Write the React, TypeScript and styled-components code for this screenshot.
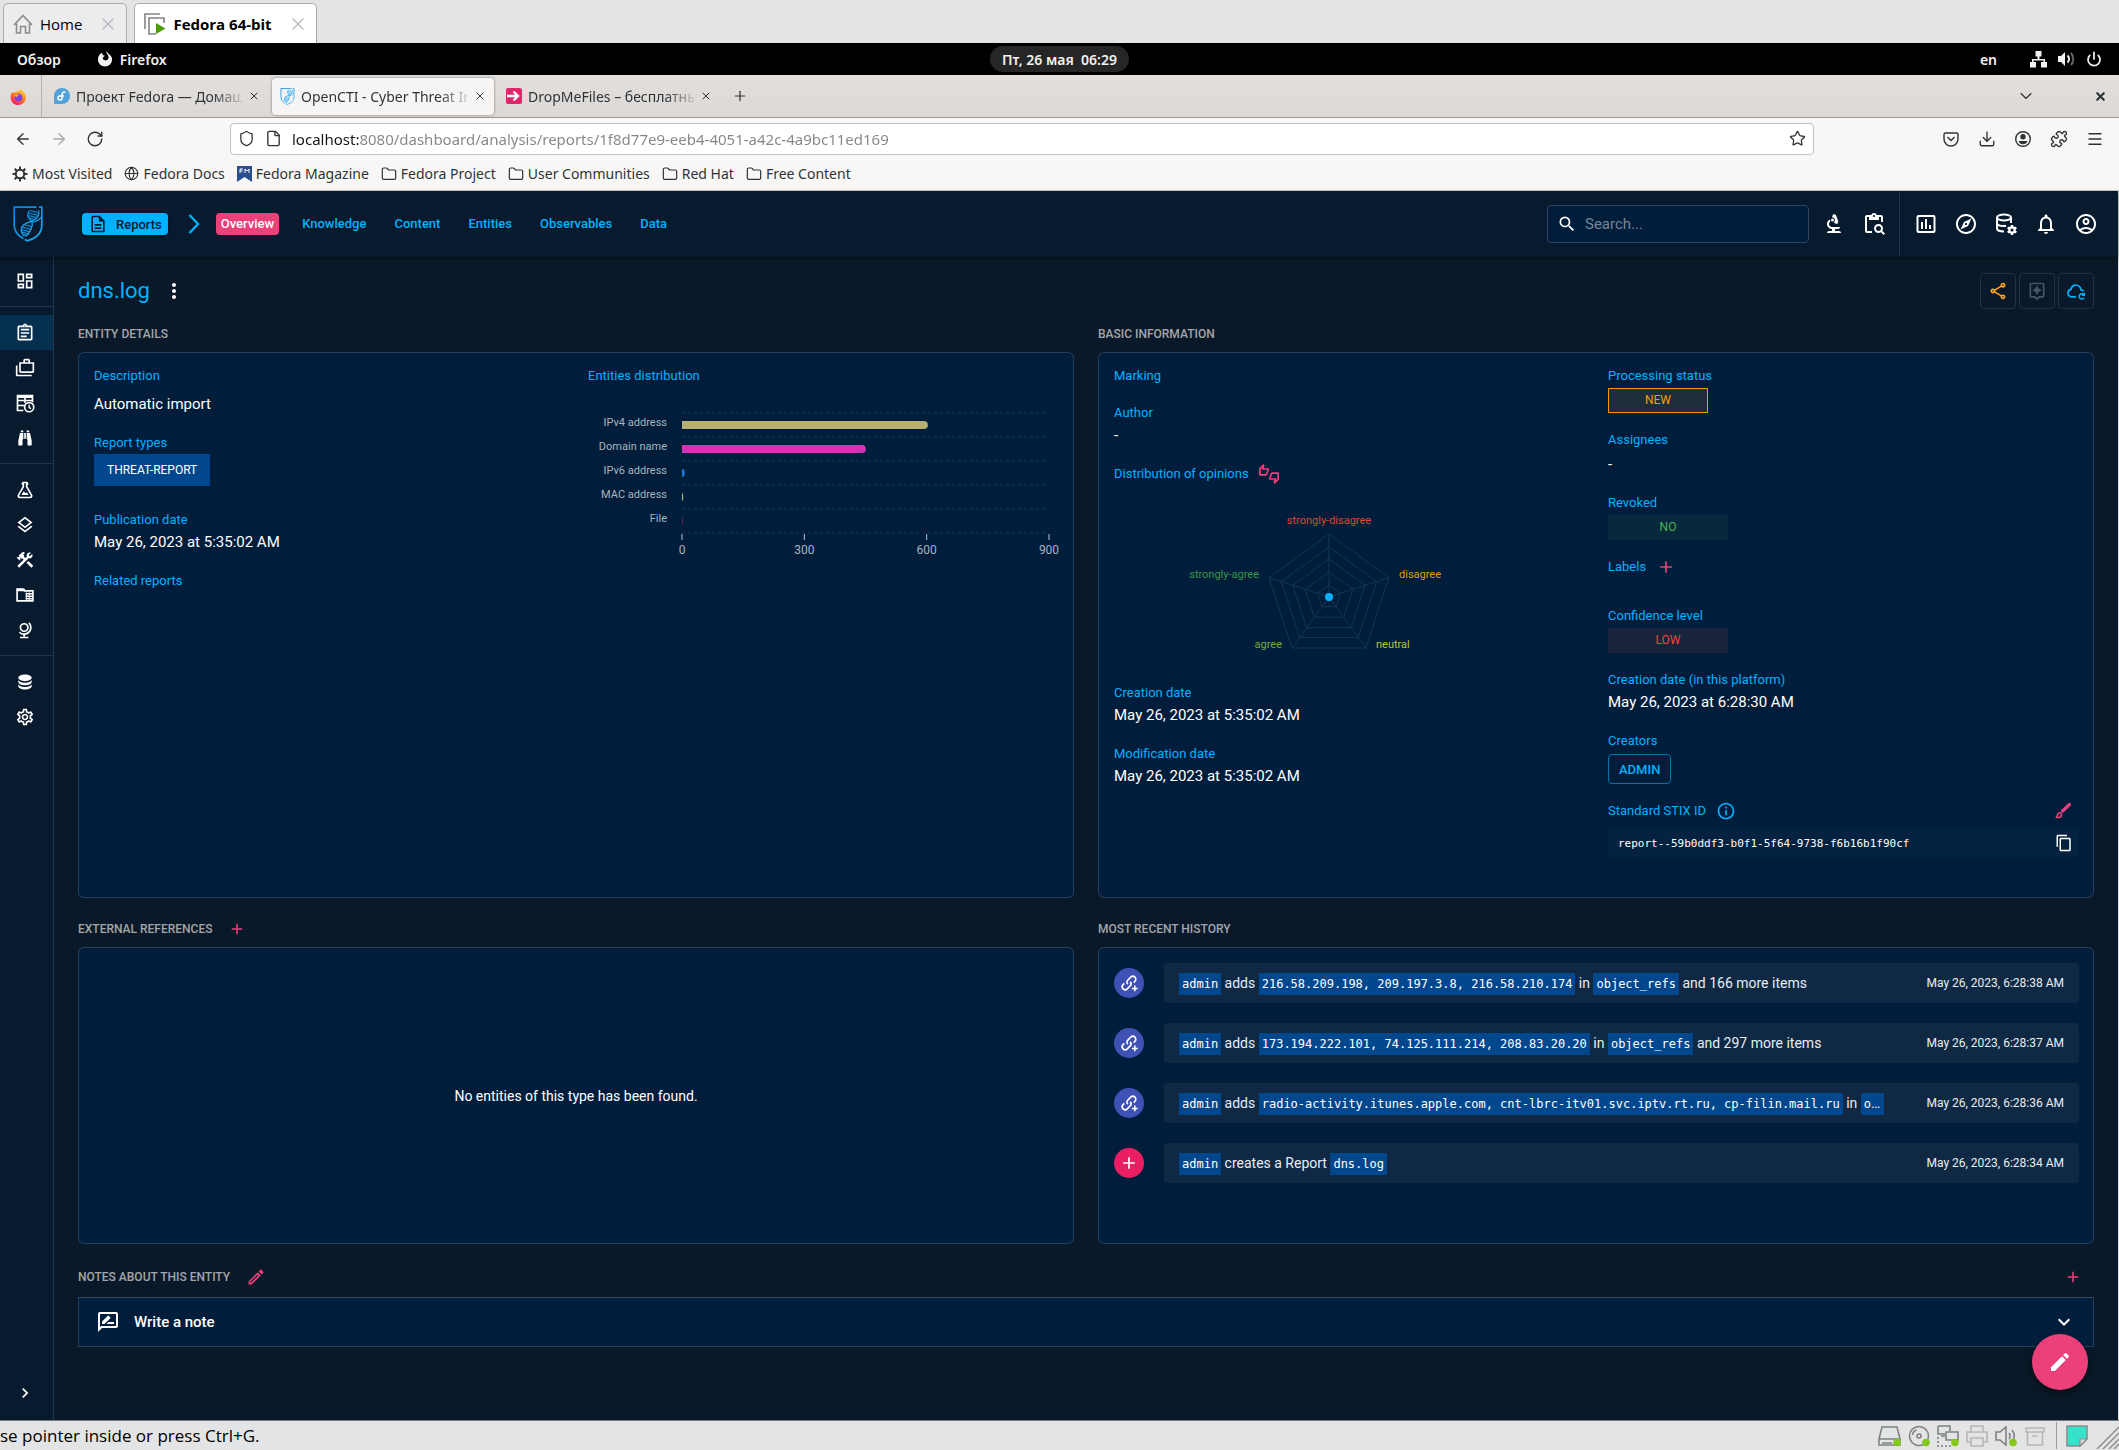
import React from 'react';
import styled, { createGlobalStyle, css } from 'styled-components';
import {
  MdOutlineDashboard, MdOutlineAssignment, MdOutlineCases, MdOutlineLayers, MdConstruction, MdOutlineSettings,
  MdChevronRight, MdSearch, MdBiotech, MdContentPasteSearch, MdInsertChartOutlined, MdOutlineExplore,
  MdNotificationsNone, MdOutlineAccountCircle, MdOutlineDescription, MdOutlineShare, MdOutlineAssistant,
  MdMoreVert, MdOutlineThumbsUpDown, MdAdd, MdOutlineInfo, MdContentCopy, MdOutlineEdit, MdOutlineRateReview,
  MdExpandMore, MdEdit,
} from 'react-icons/md';
import {
  ArrowLeft, ArrowRight, RotateCw, Shield, File, Star, Download, Menu, ChevronDown, X, Plus, Globe,
  Folder, Puzzle, Power,
} from 'lucide-react';

const c = {
  primary: '#00b1ff',
  secondary: '#ec407a',
  bg: '#0a1929',
  paper: '#001e3c',
  nav: '#071a2e',
  accent: '#01478d',
  line: 'rgba(255, 255, 255, 0.15)',
};
const ui = 'Roboto, "Noto Sans", sans-serif';
const chrome = '"Noto Sans", "Open Sans", sans-serif';
const vm = '"Open Sans", "Noto Sans", sans-serif';
const mono = '"DejaVu Sans Mono", "Liberation Mono", monospace';

const GlobalStyle = createGlobalStyle`
  *, *::before, *::after { box-sizing: border-box; }
  body { margin: 0; background: ${c.bg}; }
  button { font: inherit; color: inherit; border: 0; padding: 0; background: none; cursor: pointer; }
  a { color: inherit; text-decoration: none; }
  h1, h2, h3, p, ul { margin: 0; padding: 0; font-weight: 400; }
  svg { display: block; flex: none; }
`;

const Screen = styled.div`
  min-height: 100vh;
  display: flex;
  flex-direction: column;
`;

/* ---------- virtual machine window ---------- */

const VmTabs = styled.div`
  height: 43px;
  padding: 3px 3px 0;
  display: flex;
  gap: 7px;
  background: #e3e4e6;
  font-family: ${vm};
`;
const VmTab = styled.div<{ $active?: boolean }>`
  display: flex;
  align-items: center;
  gap: 7px;
  padding: 0 8px 0 9px;
  border: 1px solid #a9abad;
  border-bottom: 0;
  border-radius: 5px 5px 0 0;
  background: ${p => (p.$active ? '#fff' : '#ebecee')};
  font-size: 15px;
  font-weight: ${p => (p.$active ? 700 : 400)};
  color: #000;
`;
const VmTabClose = styled.button`
  margin-left: 9px;
  color: #b4b6b8;
`;

const VmStatus = styled.footer`
  height: 30px;
  display: flex;
  align-items: center;
  justify-content: space-between;
  border-top: 1px solid #77787a;
  background: #e3e4e6;
  color: #000;
  font-family: ${vm};
  font-size: 17px;
  line-height: 24px;
`;
const VmDevices = styled.div`
  display: flex;
  align-items: center;
  gap: 5px;
`;
const VmDivider = styled.span`
  width: 1px;
  height: 27px;
  margin: 0 4px;
  background: #9b9c9e;
`;

/* ---------- desktop top bar ---------- */

const DesktopBar = styled.div`
  height: 32px;
  display: grid;
  grid-template-columns: 1fr auto 1fr;
  align-items: center;
  padding: 0 17px;
  background: #000;
  color: #f2f2f2;
  font-family: ${chrome};
  font-size: 14px;
  font-weight: 600;
`;
const DesktopGroup = styled.div<{ $end?: boolean; $gap: number }>`
  display: flex;
  align-items: center;
  gap: ${p => p.$gap}px;
  justify-content: ${p => (p.$end ? 'flex-end' : 'flex-start')};
`;
const DesktopItem = styled.button`
  display: flex;
  align-items: center;
  gap: 7px;
`;
const Clock = styled.button`
  height: 26px;
  padding: 0 12px;
  border-radius: 13px;
  background: #262626;
  white-space: pre;
`;

/* ---------- browser ---------- */

const BrowserTabs = styled.div`
  height: 43px;
  display: flex;
  align-items: center;
  border-bottom: 1px solid #9c9995;
  background: linear-gradient(#e3dfdc, #dcd8d5);
  color: #2e3436;
  font-family: ${chrome};
  font-size: 14px;
`;
const PinnedTab = styled.button`
  width: 42px;
  height: 100%;
  padding: 0 12px 0 10px;
  border-right: 1px solid #b5b1ad;
`;
const BrowserTab = styled.div<{ $active?: boolean }>`
  width: 222px;
  height: 37px;
  margin-left: 4px;
  padding: 0 8px;
  display: flex;
  align-items: center;
  gap: 6px;
  border-radius: 4px;
  ${p => p.$active && css`
    background: #f6f5f4;
    box-shadow: 0 0 3px rgba(0, 0, 0, 0.45);
  `}
`;
const TabTitle = styled.span`
  flex: 1;
  overflow: hidden;
  white-space: nowrap;
  mask-image: linear-gradient(to right, #000 82%, rgba(0, 0, 0, 0.15));
`;
const TabActions = styled.div`
  margin-left: auto;
  padding-right: 12px;
  display: flex;
  align-items: center;
  gap: 58px;
`;
const NewTab = styled.button`
  margin-left: 12px;
`;
const AddressRow = styled.div`
  display: grid;
  grid-template-columns: 230px minmax(0, 1fr) 305px;
  align-items: center;
  height: 41px;
  background: #f8f7f6;
  color: #2e3436;
`;
const NavButtons = styled.div`
  display: flex;
  gap: 18px;
  padding-left: 14px;
`;
const IconButton = styled.button<{ $color?: string }>`
  display: inline-flex;
  color: ${p => p.$color || 'inherit'};
`;
const AddressBox = styled.label`
  height: 32px;
  display: flex;
  align-items: center;
  gap: 10px;
  padding: 0 7px;
  border: 1px solid #c3c1be;
  border-radius: 4px;
  background: #fff;
`;
const AddressInput = styled.input`
  flex: 1;
  min-width: 0;
  border: 0;
  outline: 0;
  padding: 0;
  font-family: ${chrome};
  font-size: 15px;
  color: transparent;
  background: linear-gradient(to right, #15141a 67px, #858585 67px);
  background-clip: text;
`;
const BrowserTools = styled.div`
  display: flex;
  justify-content: flex-end;
  gap: 18px;
  padding-right: 15px;
`;
const Bookmarks = styled.nav`
  height: 32px;
  display: flex;
  align-items: center;
  gap: 12px;
  padding: 0 12px 2px;
  background: #f8f7f6;
  border-bottom: 1px solid #cfccc8;
  color: #2e3436;
  font-family: ${chrome};
  font-size: 14px;
`;
const Bookmark = styled.a`
  display: flex;
  align-items: center;
  gap: 4px;
`;

/* ---------- application ---------- */

const AppShell = styled.div`
  flex: 1;
  display: flex;
  flex-direction: column;
  border-right: 1px solid #dcdcdc;
  background: ${c.bg};
  color: #fff;
  font-family: ${ui};
  font-size: 15px;
`;
const TopBar = styled.header`
  position: relative;
  height: 66px;
  display: flex;
  align-items: center;
  padding: 0 20px 0 13px;
  background: ${c.nav};
  box-shadow: 0 2px 4px rgba(0, 0, 0, 0.4);
`;
const Crumbs = styled.nav`
  flex: 1;
  display: flex;
  align-items: center;
  padding-left: 39px;
  font-size: 13px;
  font-weight: 500;
`;
const TypeButton = styled.button`
  height: 22px;
  display: flex;
  align-items: center;
  gap: 8px;
  padding: 0 6px;
  border-radius: 4px;
  background: ${c.primary};
  color: ${c.nav};
  box-shadow: 0 2px 3px rgba(0, 0, 0, 0.35);
`;
const CrumbArrow = styled.svg`
  margin: 0 16px 0 20px;
`;
const NavTabs = styled.div`
  display: flex;
  gap: 18px;
`;
const NavTab = styled.a<{ $active?: boolean }>`
  height: 22px;
  line-height: 22px;
  padding: 0 5px;
  border-radius: 4px;
  background: ${p => (p.$active ? c.secondary : 'transparent')};
  color: ${p => (p.$active ? '#fff' : c.primary)};
`;
const SearchBox = styled.label`
  width: 262px;
  height: 38px;
  display: flex;
  align-items: center;
  gap: 8px;
  padding: 0 9px;
  border: 1px solid #2f4762;
  border-radius: 4px;
  background: ${c.paper};
`;
const SearchInput = styled.input`
  flex: 1;
  min-width: 0;
  padding: 0;
  border: 0;
  outline: 0;
  background: none;
  color: #fff;
  font-family: ${ui};
  font-size: 15px;
  &::placeholder { color: #74859a; opacity: 1; }
`;
const ToolGroup = styled.div<{ $divided?: boolean }>`
  height: 64px;
  display: flex;
  align-items: center;
  gap: 16px;
  padding: ${p => (p.$divided ? '0 0 0 14px' : '0 13px')};
  border-left: ${p => (p.$divided ? '1px solid #253549' : '0')};
`;

const Body = styled.div`
  flex: 1;
  display: flex;
`;
const SideBar = styled.nav`
  width: 54px;
  display: flex;
  flex-direction: column;
  border-right: 1px solid #253549;
  background: ${c.nav};
`;
const SideGroup = styled.div`
  padding: 8px 0;
  border-bottom: 1px solid #253549;
  &:first-child { padding-top: 6px; }
  &:nth-last-child(2) { border-bottom: 0; }
`;
const SideItem = styled.button<{ $active?: boolean }>`
  width: 100%;
  height: 35px;
  display: flex;
  align-items: center;
  padding-left: 15px;
  background: ${p => (p.$active ? '#06304f' : 'none')};
`;
const SideToggle = styled.div`
  margin-top: auto;
  padding-bottom: 10px;
`;

const Main = styled.main`
  flex: 1;
  min-width: 0;
  padding: 16px 24px;
`;
const TitleRow = styled.div`
  display: flex;
  align-items: center;
  margin-bottom: 15px;
`;
const Title = styled.h1`
  color: ${c.primary};
  font-size: 22px;
  line-height: 36px;
  margin-right: 12px;
`;
const TitleActions = styled.div`
  margin-left: auto;
  display: flex;
  gap: 3px;
`;
const SquareButton = styled.button<{ $color: string }>`
  width: 36px;
  height: 36px;
  display: grid;
  place-items: center;
  border: 1px solid #223140;
  border-radius: 4px;
  color: ${p => p.$color};
`;
const Sections = styled.div`
  display: flex;
  flex-direction: column;
  gap: 21px;
`;
const SectionRow = styled.div`
  display: grid;
  grid-template-columns: repeat(2, minmax(0, 1fr));
  gap: 24px;
`;
const SectionHead = styled.div<{ $tall?: boolean }>`
  height: ${p => (p.$tall ? 24 : 20)}px;
  margin-bottom: 8px;
  display: flex;
  align-items: center;
  gap: 16px;
`;
const SectionTitle = styled.h2`
  color: #a3a6aa;
  font-size: 12px;
  font-weight: 500;
  line-height: 20px;
  text-transform: uppercase;
`;
const Card = styled.div<{ $minHeight: number }>`
  min-height: ${p => p.$minHeight}px;
  border: 1px solid ${c.line};
  border-radius: 6px;
  background: ${c.paper};
`;
const FieldColumns = styled(Card)`
  display: grid;
  grid-template-columns: repeat(2, minmax(0, 1fr));
  gap: 24px;
  padding: 13px 15px;
`;
const FieldColumn = styled.div`
  display: flex;
  flex-direction: column;
  gap: 17px;
`;
const FieldLabel = styled.h3`
  height: 20px;
  display: flex;
  align-items: center;
  gap: 10px;
  color: ${c.primary};
  font-size: 13px;
  line-height: 20px;
`;
const LabelEnd = styled.span`
  margin-left: auto;
  padding-right: 6px;
  display: flex;
`;
const FieldValue = styled.p<{ $space?: number }>`
  padding-top: ${p => p.$space || 0}px;
  line-height: 24px;
`;
const EmptyValue = styled.div`
  height: 12px;
`;
const TypeChip = styled.span`
  display: inline-block;
  height: 32px;
  margin: 1px 0 7px;
  padding: 0 13px;
  background: ${c.accent};
  font-size: 12px;
  line-height: 32px;
`;
const tones = {
  orange: { fg: '#ff9800', bg: '#1f2d38', border: '#ff9800' },
  green: { fg: '#4caf50', bg: '#06293e', border: '#06293e' },
  red: { fg: '#f44336', bg: '#19233b', border: '#19233b' },
};
const StatusChip = styled.span<{ $tone: keyof typeof tones; $width: number }>`
  width: ${p => p.$width}px;
  height: 25px;
  margin-top: 2px;
  display: block;
  border: 1px solid ${p => tones[p.$tone].border};
  background: ${p => tones[p.$tone].bg};
  color: ${p => tones[p.$tone].fg};
  font-size: 12px;
  line-height: 23px;
  text-align: center;
`;
const CreatorButton = styled.button`
  height: 30px;
  margin-top: 3px;
  padding: 0 10px;
  border: 1px solid #0373ae;
  border-radius: 4px;
  color: ${c.primary};
  font-size: 13px;
  font-weight: 500;
`;
const CodeBox = styled.div`
  height: 28px;
  margin-top: 8px;
  display: flex;
  align-items: center;
  justify-content: space-between;
  padding: 0 5px 0 10px;
  background: #052340;
  font-family: ${mono};
  font-size: 11px;
`;
const Chart = styled.svg`
  width: 100%;
  height: auto;
  overflow: visible;
  font-family: ${ui};
`;
const ChartBlock = styled.div`
  margin-top: 4px;
`;
const RadarBlock = styled.div`
  height: 182px;
  display: flex;
  align-items: flex-start;
  justify-content: center;
  padding-right: 40px;
`;
const EmptyCard = styled(Card)`
  display: grid;
  place-items: center;
  font-size: 14px;
`;
const HistoryCard = styled(Card)`
  display: flex;
  flex-direction: column;
  gap: 20px;
  padding: 15px 14px 15px 15px;
`;
const HistoryRow = styled.div`
  display: flex;
  align-items: center;
  gap: 20px;
`;
const Avatar = styled.span<{ $color: string }>`
  width: 30px;
  height: 30px;
  flex: none;
  display: grid;
  place-items: center;
  border-radius: 50%;
  background: ${p => p.$color};
`;
const HistoryBox = styled.div`
  flex: 1;
  min-width: 0;
  height: 40px;
  display: flex;
  align-items: center;
  padding: 0 15px;
  border-radius: 4px;
  background: #0f2944;
`;
const HistoryText = styled.p`
  flex: 1;
  min-width: 0;
  overflow: hidden;
  white-space: nowrap;
  text-overflow: ellipsis;
  line-height: 24px;
  font-size: 14px;
  color: #e9edf1;
`;
const Code = styled.code`
  padding: 4px 3px;
  background: ${c.accent};
  color: #fff;
  font-family: ${mono};
  font-size: 12px;
`;
const HistoryDate = styled.time`
  flex: 0 0 180px;
  text-align: right;
  font-size: 12px;
  color: #e9edf1;
`;
const NotePanel = styled.button`
  width: 100%;
  height: 50px;
  display: flex;
  align-items: center;
  gap: 14px;
  padding: 0 17px;
  border: 1px solid ${c.line};
  border-top-color: #34495f;
  background: ${c.paper};
  font-size: 15px;
  font-weight: 500;
`;
const PushRight = styled.span`
  margin-left: auto;
  display: flex;
`;
const HeadEnd = styled(PushRight)`
  padding-right: 12px;
`;
const EditFab = styled.button`
  position: fixed;
  right: 31px;
  bottom: 60px;
  width: 56px;
  height: 56px;
  display: grid;
  place-items: center;
  border-radius: 50%;
  background: ${c.secondary};
  color: #fff;
  box-shadow: 0 4px 8px rgba(0, 0, 0, 0.45);
`;

/* ---------- drawings ---------- */

type GlyphProps = { d: string; size?: number };
const Glyph = ({ d, size = 20 }: GlyphProps) => (
  <svg width={size} height={size} viewBox="0 0 24 24" fill="currentColor" aria-hidden="true"><path d={d} /></svg>
);
const glyph = {
  binoculars: 'M11,6H13V13H11V6M9,20A1,1 0 0,1 8,21H5A1,1 0 0,1 4,20V15L6,6H10V13A1,1 0 0,1 9,14V20M10,5H7V3H10V5M15,20V14A1,1 0 0,1 14,13V6H18L20,15V20A1,1 0 0,1 19,21H16A1,1 0 0,1 15,20M14,5V3H17V5H14Z',
  flask: 'M5,19A1,1 0 0,0 6,20H18A1,1 0 0,0 19,19C19,18.79 18.93,18.59 18.82,18.43L13,8.35V4H11V8.35L5.18,18.43C5.07,18.59 5,18.79 5,19M6,22A3,3 0 0,1 3,19C3,18.4 3.18,17.84 3.5,17.37L9,7.81V6A1,1 0 0,1 8,5V4A2,2 0 0,1 10,2H14A2,2 0 0,1 16,4V5A1,1 0 0,1 15,6V7.81L20.5,17.37C20.82,17.84 21,18.4 21,19A3,3 0 0,1 18,22H6M13,16L14.34,14.66L16.27,18H7.73L10.39,13.39L13,16M12.5,12A0.5,0.5 0 0,1 13,12.5A0.5,0.5 0 0,1 12.5,13A0.5,0.5 0 0,1 12,12.5A0.5,0.5 0 0,1 12.5,12Z',
  globeModel: 'M17.36,2.64L15.95,4.06C17.26,5.37 18,7.14 18,9A7,7 0 0,1 11,16C9.15,16 7.37,15.26 6.06,13.95L4.64,15.36C6.08,16.8 7.97,17.71 10,17.93V20H6V22H16V20H12V17.94C16.55,17.43 20,13.58 20,9C20,6.62 19.05,4.33 17.36,2.64M11,3.5A5.5,5.5 0 0,0 5.5,9A5.5,5.5 0 0,0 11,14.5A5.5,5.5 0 0,0 16.5,9A5.5,5.5 0 0,0 11,3.5M11,5.5C12.94,5.5 14.5,7.07 14.5,9A3.5,3.5 0 0,1 11,12.5A3.5,3.5 0 0,1 7.5,9A3.5,3.5 0 0,1 11,5.5Z',
  database: 'M12,3C7.58,3 4,4.79 4,7C4,9.21 7.58,11 12,11C16.42,11 20,9.21 20,7C20,4.79 16.42,3 12,3M4,9V12C4,14.21 7.58,16 12,16C16.42,16 20,14.21 20,12V9C20,11.21 16.42,13 12,13C7.58,13 4,11.21 4,9M4,14V17C4,19.21 7.58,21 12,21C16.42,21 20,19.21 20,17V14C20,16.21 16.42,18 12,18C7.58,18 4,16.21 4,14Z',
};
const TableClock = () => (
  <svg width="20" height="20" viewBox="0 0 24 24" fill="none" stroke="currentColor" strokeWidth="2" aria-hidden="true">
    <path d="M10 21H3V3h18v8M3 9h18M3 15h8M12 3v9" /><path d="M3 4.500h18" strokeWidth="3" />
    <circle cx="17" cy="17" r="5.500" /><path d="M17 14v3.500l2.300 1.300" strokeWidth="1.700" />
  </svg>
);
const FolderTable = () => (
  <svg width="20" height="20" viewBox="0 0 24 24" fill="none" stroke="currentColor" strokeWidth="2" aria-hidden="true">
    <path d="M2.500 5h7l2 2h10v12h-19z" /><path d="M2 6h10" strokeWidth="3" />
    <path d="M13 10.500h8M13 13.500h8M13 16.500h8" strokeWidth="1.800" /><path d="M13.500 9v8.500M17 9v8.500" strokeWidth="1.300" />
  </svg>
);
const Gear = ({ x, y }: { x: number; y: number }) => (
  <g transform={`translate(${x} ${y})`}>
    <circle r="2.700" strokeWidth="2.200" />
    {[0, 60, 120, 180, 240, 300].map(a => <path key={a} d="M0 -3v-2" strokeWidth="2.400" transform={`rotate(${a})`} />)}
  </g>
);
const DatabaseCog = () => (
  <svg width="24" height="24" viewBox="0 0 24 24" fill="none" stroke="currentColor" strokeWidth="2" aria-hidden="true">
    <ellipse cx="10" cy="5.500" rx="7" ry="3" />
    <path d="M3 5.500v11c0 1.700 3.100 3 7 3M17 5.500V11M3 11c0 1.700 3 3 7 3 .8 0 1.500 0 2-.2" />
    <Gear x={18} y={18} />
  </svg>
);
const CloudRefresh = () => (
  <svg width="20" height="20" viewBox="0 0 24 24" fill="none" stroke="currentColor" strokeWidth="2" aria-hidden="true">
    <path d="M12 19H6.500A4.500 4.500 0 0 1 6 10.100 6 6 0 0 1 17.900 10.500c1.500.2 2.600.8 3.300 1.700" />
    <path d="M21.500 16.500a3.200 3.200 0 1 0 .3 3.500M22 14v3h-3" strokeWidth="1.700" />
  </svg>
);
const LinkPlus = () => (
  <svg width="20" height="20" viewBox="0 0 24 24" fill="none" stroke="currentColor" strokeWidth="1.900" aria-hidden="true">
    <path d="M10.600 13.400c-1.500-1.500-1.500-3.400 0-4.900l3.500-3.500a3.500 3.500 0 0 1 5 5l-1.500 1.500" />
    <path d="M13.400 10.600c1.500 1.500 1.500 3.400 0 4.900l-3.500 3.500a3.500 3.500 0 0 1-5-5l1.500-1.500" />
    <path d="M19 15v7M15.500 18.500h7" />
  </svg>
);
const BrushIcon = () => (
  <svg width="18" height="18" viewBox="0 0 24 24" fill="none" stroke="currentColor" aria-hidden="true">
    <path d="M20.500 3.500L11.500 12" strokeWidth="4.500" strokeLinecap="round" />
    <path d="M7.500 14.500a2.600 2.600 0 0 1 2.500 3.400C9.300 20 6 21 2.500 20.500c1.800-.6 1.800-1.800 2.200-3.500.3-1.500 1.300-2.500 2.800-2.500z" strokeWidth="2" />
  </svg>
);
const Logo = ({ width = 30, height = 36 }: { width?: number; height?: number }) => (
  <svg width={width} height={height} viewBox="0 0 30 36" fill="none" stroke="url(#logo-tone)" aria-label="OpenCTI" role="img">
    <defs>
      <linearGradient id="logo-tone" x1="0" y1="0" x2="30" y2="36" gradientUnits="userSpaceOnUse">
        <stop offset="0" stopColor="#0a7fe0" /><stop offset="1" stopColor="#18b4f5" />
      </linearGradient>
    </defs>
    <path d="M23.500 1.200H1.200V19c0 6 3.500 10.500 9 13.500M26 1.200h2.800V19c0 7-5 13-14.500 15.800l-2.500-1.300" strokeWidth="1.700" />
    <path d="M16 5c-2 3-1.500 6 1 8.500 2.500 2.300 2.700 6 1 9.500-1.200 2.800-2.500 5-5.500 7.500" strokeWidth="1.300" />
    <path d="M25.500 4.500c1 4.500-1.500 8.500-6.500 10.500-5 1.800-9.500 3-10.500 7.500-.6 3 .5 5.500 3 7.500" strokeWidth="1.500" />
    <path d="M28 11c-1.500 3.500-5 4.500-9 5.500" strokeWidth="1.200" />
    <path d="M16.500 4.500l8 2M15.500 7l9 2.200M15.500 9.500l8 2M16.500 12l5 1.300M10.500 18.500l7.500 2M9 21l9.500 2.500M8.500 23.500l9 2.500M9 26l7 2M10.500 28.500l3.500 1" strokeWidth="1.100" />
  </svg>
);
const FirefoxLogo = () => (
  <svg width="17" height="17" viewBox="0 0 18 18" aria-hidden="true">
    <defs>
      <linearGradient id="fox" x1="14" y1="1" x2="4" y2="17" gradientUnits="userSpaceOnUse">
        <stop offset="0" stopColor="#ffe14a" /><stop offset=".45" stopColor="#ff8a16" /><stop offset="1" stopColor="#f5156c" />
      </linearGradient>
    </defs>
    <path d="M11 0c.5 2 3 3 4.500 5.200C19.500 11 15 18 9 18S-.5 13 1 7c.3-1.300 1-2.500 1.500-3 .2.800.6 1.300 1 1.600C5.500 3.500 8.500 4 9.500 2.800 10 2 10.300 1 11 0z" fill="url(#fox)" />
    <circle cx="9" cy="10" r="4" fill="#7a3ff0" /><path d="M4.500 7.500c2-1.500 4.500-.5 5 .8-1.500 0-2.500 1-3 2-.5-1.500-1-2-2-2.800z" fill="#ffa824" />
  </svg>
);
const FoxMono = () => (
  <svg width="16" height="16" viewBox="0 0 18 18" fill="#f2f2f2" aria-hidden="true">
    <path d="M10.500 0c0 2 .5 3 1.500 4.200 1 1.300 1.300 3 .8 4.300-.8 2-3 2.700-4.800 1.700C6.600 9.400 6.300 8 7 7l2-1.800C7 5 6 4.500 5.500 2 3.500 3 1 5.500 1 9.500a8 8 0 0 0 16 0C17 5 13 4 10.500 0z" />
  </svg>
);
const HomeIcon = () => (
  <svg width="20" height="20" viewBox="0 0 20 20" fill="none" stroke="#8a8c8e" strokeWidth="1.600" aria-hidden="true">
    <path d="M1 11L10 1.500 19 11M3.500 9.500V19H7.500V12.500h5V19h4V9.500" />
  </svg>
);
const MachineIcon = () => (
  <svg width="22" height="22" viewBox="0 0 22 22" fill="none" stroke="#808284" strokeWidth="1.600" aria-hidden="true">
    <path d="M1 16V1h15M12 21H5V5h15v5" /><path d="M12 10l9.500 5.500L12 21z" fill="#4e9a06" stroke="none" />
  </svg>
);
const FedoraIcon = () => (
  <svg width="16" height="16" viewBox="0 0 16 16" aria-hidden="true">
    <path d="M0 8a8 8 0 1 1 8 8H1.500A1.500 1.500 0 0 1 0 14.500z" fill="#51a2da" />
    <path d="M11.500 4.200C9.800 3.400 8 4.500 8 6.500V10a2 2 0 1 1-2-2h4" fill="none" stroke="#fff" strokeWidth="1.500" />
  </svg>
);
const DropIcon = () => (
  <svg width="16" height="16" viewBox="0 0 16 16" aria-hidden="true">
    <rect width="16" height="16" rx="2" fill="#e5246c" /><path d="M1 8h10M7.500 3.500L12 8l-4.500 4.500" fill="none" stroke="#fff" strokeWidth="2.400" />
  </svg>
);
const MagazineIcon = () => (
  <svg width="15" height="16" viewBox="0 0 15 16" aria-hidden="true">
    <path d="M0 0h15v16l-7.500-5L0 16z" fill="#294f91" /><path d="M3 7V3h3M3 5h2.500M8 7V3l2 2 2-2v4" fill="none" stroke="#fff" />
  </svg>
);
const SunGear = () => (
  <svg width="16" height="16" viewBox="0 0 16 16" fill="none" stroke="#2e3436" aria-hidden="true">
    <circle cx="8" cy="8" r="4.200" strokeWidth="2" />
    {[0, 45, 90, 135, 180, 225, 270, 315].map(a => <path key={a} d="M8 .5v3" strokeWidth="2" transform={`rotate(${a} 8 8)`} />)}
  </svg>
);
const NetworkIcon = () => (
  <svg width="17" height="17" viewBox="0 0 17 17" fill="#f2f2f2" aria-hidden="true">
    <path d="M5.500 0h6v5.500h-2V8H15v3h2v5.500h-6V11h2.500V9.500h-10V11H6v5.500H0V11h2V8h5.500V5.500h-2z" />
  </svg>
);
const SpeakerIcon = () => (
  <svg width="17" height="16" viewBox="0 0 17 16" fill="#f2f2f2" aria-hidden="true">
    <path d="M0 5h3l4-4v14l-4-4H0z" /><path d="M9.500 4.500c2 2 2 5 0 7" stroke="#f2f2f2" strokeWidth="2" fill="none" />
    <path d="M13 2c3 3.500 3 8.500 0 12" stroke="#666" strokeWidth="2" fill="none" />
  </svg>
);
const PocketIcon = () => (
  <svg width="18" height="18" viewBox="0 0 18 18" fill="none" stroke="currentColor" strokeWidth="1.400" aria-hidden="true">
    <path d="M3.500 3h11A1.500 1.500 0 0 1 16 4.500V9A7 7 0 0 1 2 9V4.500A1.500 1.500 0 0 1 3.500 3z" /><path d="M5.500 7L9 10.500 12.500 7" />
  </svg>
);
const AccountIcon = () => (
  <svg width="18" height="18" viewBox="0 0 18 18" fill="currentColor" aria-hidden="true">
    <circle cx="9" cy="9" r="7.300" fill="none" stroke="currentColor" strokeWidth="1.400" />
    <circle cx="9" cy="6.800" r="2.700" /><path d="M4.500 11h9c-.7 2.300-2.500 3.300-4.500 3.300S5.200 13.300 4.500 11z" />
  </svg>
);

const deviceShapes: { name: string; live?: boolean; faint?: boolean; shape: React.ReactNode }[] = [
  { name: 'Hard disk', live: true, shape: <path d="M1 14L4 2h15l3 12v6H1zM1 14h21M4 18h10" /> },
  { name: 'CD/DVD', live: true, shape: <><circle cx="12" cy="11" r="9.500" /><circle cx="12" cy="11" r="2" /><path d="M5.500 10a6 6 0 0 1 4-5" /></> },
  { name: 'Network', live: true, shape: <><path d="M2 1h12v5M2 1v8h7M10 7h12v8H10zM5 11h4" /><path d="M2 12v9h14" strokeDasharray="2 2" /></> },
  { name: 'Printer', faint: true, shape: <path d="M6 7V1h12v6M5 17H2V7h20v10h-3M6 13h12v8H6z" /> },
  { name: 'Sound', live: true, shape: <path d="M2 7h4l6-5v18l-6-5H2zM15 8c1.500 2 1.500 4 0 6M18 5c3 4 3 8 0 12" /> },
  { name: 'Removable', faint: true, shape: <path d="M3 3h18v4H3zM4.500 7v13h15V7M9 11h6" /> },
];
const DeviceIcon = ({ shape, live, faint }: { shape: React.ReactNode; live?: boolean; faint?: boolean }) => (
  <svg width="24" height="22" viewBox="0 0 24 22" fill="none" stroke={faint ? '#b5b6b8' : '#7f8183'} strokeWidth="1.600" aria-hidden="true">
    {shape}{live && <circle cx="19" cy="17.500" r="3.800" fill="#84c919" stroke="none" />}
  </svg>
);

const entityCounts = [
  { label: 'IPv4 address', value: 603, color: '#b8b070' },
  { label: 'Domain name', value: 451, color: '#cf35b5' },
  { label: 'IPv6 address', value: 7, color: '#1976d2' },
  { label: 'MAC address', value: 3, color: '#a9b877' },
  { label: 'File', value: 1, color: '#5a2b4d' },
];
const DistributionChart = () => {
  const left = 94, right = 461, top = 23, step = 24, unit = (right - left) / 900;
  const bottom = top + step * entityCounts.length;
  return (
    <Chart viewBox="0 0 470 180" role="img" aria-label="Entities distribution">
      {[...entityCounts, null].map((_, i) => (
        <line key={i} x1={left} x2={right - 4} y1={top + i * step} y2={top + i * step} stroke="#1b3652" strokeDasharray="3 3" />
      ))}
      {entityCounts.map((e, i) => {
        const w = Math.max(1, e.value * unit), r = Math.min(4, w), y = top + i * step + 8;
        return (
          <g key={e.label}>
            <path d={`M${left} ${y}h${w - r}a${r} 4 0 0 1 0 8h${r - w}z`} fill={e.color} />
            <text x="79" y={y + 5} textAnchor="end" fontSize="11" fill="#a9b3be">{e.label}</text>
          </g>
        );
      })}
      {[0, 300, 600, 900].map(n => (
        <g key={n}>
          <line x1={left + n * unit} x2={left + n * unit} y1={bottom + 1} y2={bottom + 7} stroke="#b9c1ca" />
          <text x={left + n * unit} y={bottom + 21} textAnchor="middle" fontSize="12" fill="#a9b3be">{n}</text>
        </g>
      ))}
    </Chart>
  );
};

const opinions = [
  { label: 'strongly-disagree', color: '#d84a27', x: 150, y: 40, anchor: 'middle' },
  { label: 'disagree', color: '#d6a013', x: 220, y: 94, anchor: 'start' },
  { label: 'neutral', color: '#b5c437', x: 197, y: 164, anchor: 'start' },
  { label: 'agree', color: '#79a841', x: 103, y: 164, anchor: 'end' },
  { label: 'strongly-agree', color: '#3f9546', x: 80, y: 94, anchor: 'end' },
] as const;
const OpinionRadar = () => {
  const cx = 150, cy = 113;
  const point = (i: number, r: number) => {
    const a = (i * 72 - 90) * Math.PI / 180;
    return `${(cx + r * Math.cos(a)).toFixed(1)},${(cy + r * Math.sin(a)).toFixed(1)}`;
  };
  return (
    <svg width="300" height="182" viewBox="0 0 300 182" role="img" aria-label="Distribution of opinions" fontFamily={ui}>
      <g fill="none" stroke="#17344f">
        {[63, 50, 38, 25, 12].map(r => <polygon key={r} points={opinions.map((_, i) => point(i, r)).join(' ')} />)}
        {opinions.map((o, i) => <polyline key={o.label} points={`${cx},${cy} ${point(i, 63)}`} />)}
      </g>
      <circle cx={cx} cy={cy} r="4" fill={c.primary} />
      {opinions.map(o => <text key={o.label} x={o.x} y={o.y} textAnchor={o.anchor} fontSize="11" fill={o.color}>{o.label}</text>)}
    </svg>
  );
};

/* ---------- data ---------- */

const sideGroups = [
  [{ name: 'Dashboard', icon: <MdOutlineDashboard size={20} /> }],
  [
    { name: 'Analyses', icon: <MdOutlineAssignment size={20} />, active: true },
    { name: 'Cases', icon: <MdOutlineCases size={20} /> },
    { name: 'Events', icon: <TableClock /> },
    { name: 'Observations', icon: <Glyph d={glyph.binoculars} /> },
  ],
  [
    { name: 'Threats', icon: <Glyph d={glyph.flask} /> },
    { name: 'Arsenal', icon: <MdOutlineLayers size={20} /> },
    { name: 'Techniques', icon: <MdConstruction size={20} /> },
    { name: 'Entities', icon: <FolderTable /> },
    { name: 'Locations', icon: <Glyph d={glyph.globeModel} /> },
  ],
  [
    { name: 'Data', icon: <Glyph d={glyph.database} /> },
    { name: 'Settings', icon: <MdOutlineSettings size={20} /> },
  ],
] as { name: string; icon: React.ReactNode; active?: boolean }[][];

const history = [
  { time: 'May 26, 2023, 6:28:38 AM', items: '216.58.209.198, 209.197.3.8, 216.58.210.174', more: 'and 166 more items' },
  { time: 'May 26, 2023, 6:28:37 AM', items: '173.194.222.101, 74.125.111.214, 208.83.20.20', more: 'and 297 more items' },
  { time: 'May 26, 2023, 6:28:36 AM', items: 'radio-activity.itunes.apple.com, cnt-lbrc-itv01.svc.iptv.rt.ru, cp-filin.mail.ru', more: '' },
];

export default function App() {
  return (
    <Screen>
      <GlobalStyle />
      <VmTabs>
        <VmTab><HomeIcon />Home<VmTabClose aria-label="Close Home"><X size={20} strokeWidth={1.4} /></VmTabClose></VmTab>
        <VmTab $active><MachineIcon />Fedora 64-bit<VmTabClose aria-label="Close Fedora 64-bit"><X size={20} strokeWidth={1.4} /></VmTabClose></VmTab>
      </VmTabs>

      <DesktopBar>
        <DesktopGroup $gap={36}>
          <DesktopItem>Обзор</DesktopItem>
          <DesktopItem><FoxMono />Firefox</DesktopItem>
        </DesktopGroup>
        <Clock>{'Пт, 26 мая  06:29'}</Clock>
        <DesktopGroup $gap={33} $end>
          <DesktopItem>en</DesktopItem>
          <DesktopGroup $gap={11}><NetworkIcon /><SpeakerIcon /><Power size={16} strokeWidth={2.6} /></DesktopGroup>
        </DesktopGroup>
      </DesktopBar>

      <BrowserTabs>
        <PinnedTab aria-label="Firefox View"><FirefoxLogo /></PinnedTab>
        <BrowserTab><FedoraIcon /><TabTitle>Проект Fedora — Домаш</TabTitle><IconButton aria-label="Close tab"><X size={12} /></IconButton></BrowserTab>
        <BrowserTab $active><Logo width={15} height={17} /><TabTitle>OpenCTI - Cyber Threat In</TabTitle><IconButton aria-label="Close tab"><X size={12} /></IconButton></BrowserTab>
        <BrowserTab><DropIcon /><TabTitle>DropMeFiles – бесплатны</TabTitle><IconButton aria-label="Close tab"><X size={12} /></IconButton></BrowserTab>
        <NewTab aria-label="New tab"><Plus size={16} strokeWidth={1.8} /></NewTab>
        <TabActions>
          <IconButton aria-label="List all tabs"><ChevronDown size={20} strokeWidth={1.4} /></IconButton>
          <IconButton aria-label="Close window"><X size={13} strokeWidth={4} /></IconButton>
        </TabActions>
      </BrowserTabs>
      <AddressRow>
        <NavButtons>
          <IconButton aria-label="Back"><ArrowLeft size={18} strokeWidth={1.8} /></IconButton>
          <IconButton aria-label="Forward" $color="#a9a9a8"><ArrowRight size={18} strokeWidth={1.8} /></IconButton>
          <IconButton aria-label="Reload"><RotateCw size={18} strokeWidth={1.8} /></IconButton>
        </NavButtons>
        <AddressBox>
          <Shield size={17} strokeWidth={1.8} />
          <File size={17} strokeWidth={1.9} />
          <AddressInput aria-label="Address" defaultValue="localhost:8080/dashboard/analysis/reports/1f8d77e9-eeb4-4051-a42c-4a9bc11ed169" />
          <Star size={17} strokeWidth={1.8} />
        </AddressBox>
        <BrowserTools>
          <IconButton aria-label="Pocket"><PocketIcon /></IconButton>
          <IconButton aria-label="Downloads"><Download size={18} strokeWidth={1.8} /></IconButton>
          <IconButton aria-label="Account"><AccountIcon /></IconButton>
          <IconButton aria-label="Extensions"><Puzzle size={18} strokeWidth={1.8} /></IconButton>
          <IconButton aria-label="Menu"><Menu size={18} strokeWidth={1.8} /></IconButton>
        </BrowserTools>
      </AddressRow>
      <Bookmarks>
        <Bookmark href="#"><SunGear />Most Visited</Bookmark>
        <Bookmark href="#"><Globe size={15} strokeWidth={1.8} />Fedora Docs</Bookmark>
        <Bookmark href="#"><MagazineIcon />Fedora Magazine</Bookmark>
        <Bookmark href="#"><Folder size={16} strokeWidth={1.8} />Fedora Project</Bookmark>
        <Bookmark href="#"><Folder size={16} strokeWidth={1.8} />User Communities</Bookmark>
        <Bookmark href="#"><Folder size={16} strokeWidth={1.8} />Red Hat</Bookmark>
        <Bookmark href="#"><Folder size={16} strokeWidth={1.8} />Free Content</Bookmark>
      </Bookmarks>

      <AppShell>
        <TopBar>
          <Logo />
          <Crumbs>
            <TypeButton><MdOutlineDescription size={20} />Reports</TypeButton>
            <CrumbArrow width="12" height="20" viewBox="0 0 12 20" fill="none" stroke={c.primary} strokeWidth="2.400"><path d="M1.500 1L10 10l-8.500 9" /></CrumbArrow>
            <NavTabs>
              <NavTab href="#" $active>Overview</NavTab>
              {['Knowledge', 'Content', 'Entities', 'Observables', 'Data'].map(t => <NavTab key={t} href="#">{t}</NavTab>)}
            </NavTabs>
          </Crumbs>
          <SearchBox>
            <MdSearch size={20} />
            <SearchInput type="search" placeholder="Search..." aria-label="Search" />
          </SearchBox>
          <ToolGroup>
            <IconButton aria-label="Advanced search"><MdBiotech size={24} /></IconButton>
            <IconButton aria-label="Bulk search"><MdContentPasteSearch size={24} /></IconButton>
          </ToolGroup>
          <ToolGroup $divided>
            <IconButton aria-label="Dashboards"><MdInsertChartOutlined size={24} /></IconButton>
            <IconButton aria-label="Investigations"><MdOutlineExplore size={24} /></IconButton>
            <IconButton aria-label="Data import"><DatabaseCog /></IconButton>
            <IconButton aria-label="Notifications"><MdNotificationsNone size={24} /></IconButton>
            <IconButton aria-label="Profile"><MdOutlineAccountCircle size={24} /></IconButton>
          </ToolGroup>
        </TopBar>

        <Body>
          <SideBar>
            {sideGroups.map((group, i) => (
              <SideGroup key={i}>
                {group.map(item => <SideItem key={item.name} $active={item.active} aria-label={item.name}>{item.icon}</SideItem>)}
              </SideGroup>
            ))}
            <SideToggle><SideItem aria-label="Expand menu"><MdChevronRight size={20} /></SideItem></SideToggle>
          </SideBar>

          <Main>
            <TitleRow>
              <Title>dns.log</Title>
              <IconButton aria-label="More actions"><MdMoreVert size={24} /></IconButton>
              <TitleActions>
                <SquareButton $color="#ffa726" aria-label="Share"><MdOutlineShare size={20} /></SquareButton>
                <SquareButton $color="#475462" aria-label="Suggestions"><MdOutlineAssistant size={20} /></SquareButton>
                <SquareButton $color={c.primary} aria-label="Enrichment"><CloudRefresh /></SquareButton>
              </TitleActions>
            </TitleRow>

            <Sections>
              <SectionRow>
                <section>
                  <SectionHead><SectionTitle>Entity details</SectionTitle></SectionHead>
                  <FieldColumns $minHeight={546}>
                    <FieldColumn>
                      <div><FieldLabel>Description</FieldLabel><FieldValue $space={6}>Automatic import</FieldValue></div>
                      <div><FieldLabel>Report types</FieldLabel><TypeChip>THREAT-REPORT</TypeChip></div>
                      <div><FieldLabel>Publication date</FieldLabel><FieldValue>May 26, 2023 at 5:35:02 AM</FieldValue></div>
                      <FieldLabel>Related reports</FieldLabel>
                    </FieldColumn>
                    <div>
                      <FieldLabel>Entities distribution</FieldLabel>
                      <ChartBlock><DistributionChart /></ChartBlock>
                    </div>
                  </FieldColumns>
                </section>
                <section>
                  <SectionHead><SectionTitle>Basic information</SectionTitle></SectionHead>
                  <FieldColumns $minHeight={546}>
                    <FieldColumn>
                      <FieldLabel>Marking</FieldLabel>
                      <div><FieldLabel>Author</FieldLabel><FieldValue>-</FieldValue></div>
                      <div>
                        <FieldLabel>Distribution of opinions<IconButton $color={c.secondary} aria-label="Give opinion"><MdOutlineThumbsUpDown size={20} /></IconButton></FieldLabel>
                        <RadarBlock><OpinionRadar /></RadarBlock>
                      </div>
                      <div><FieldLabel>Creation date</FieldLabel><FieldValue>May 26, 2023 at 5:35:02 AM</FieldValue></div>
                      <div><FieldLabel>Modification date</FieldLabel><FieldValue>May 26, 2023 at 5:35:02 AM</FieldValue></div>
                    </FieldColumn>
                    <FieldColumn>
                      <div><FieldLabel>Processing status</FieldLabel><StatusChip $tone="orange" $width={100}>NEW</StatusChip></div>
                      <div><FieldLabel>Assignees</FieldLabel><FieldValue $space={2}>-</FieldValue></div>
                      <div><FieldLabel>Revoked</FieldLabel><StatusChip $tone="green" $width={120}>NO</StatusChip></div>
                      <div><FieldLabel>Labels<IconButton $color={c.secondary} aria-label="Add label"><MdAdd size={20} /></IconButton></FieldLabel><EmptyValue /></div>
                      <div><FieldLabel>Confidence level</FieldLabel><StatusChip $tone="red" $width={120}>LOW</StatusChip></div>
                      <div><FieldLabel>Creation date (in this platform)</FieldLabel><FieldValue>May 26, 2023 at 6:28:30 AM</FieldValue></div>
                      <div><FieldLabel>Creators</FieldLabel><CreatorButton>ADMIN</CreatorButton></div>
                      <div>
                        <FieldLabel>Standard STIX ID<MdOutlineInfo size={20} />
                          <LabelEnd><IconButton $color={c.secondary} aria-label="Clean identifiers"><BrushIcon /></IconButton></LabelEnd>
                        </FieldLabel>
                        <CodeBox>report--59b0ddf3-b0f1-5f64-9738-f6b16b1f90cf<IconButton aria-label="Copy"><MdContentCopy size={18} /></IconButton></CodeBox>
                      </div>
                    </FieldColumn>
                  </FieldColumns>
                </section>
              </SectionRow>

              <SectionRow>
                <section>
                  <SectionHead><SectionTitle>External references</SectionTitle><IconButton $color={c.secondary} aria-label="Add reference"><MdAdd size={18} /></IconButton></SectionHead>
                  <EmptyCard $minHeight={297}>No entities of this type has been found.</EmptyCard>
                </section>
                <section>
                  <SectionHead><SectionTitle>Most recent history</SectionTitle></SectionHead>
                  <HistoryCard $minHeight={297}>
                    {history.map(h => (
                      <HistoryRow key={h.time}>
                        <Avatar $color="#3f51b5"><LinkPlus /></Avatar>
                        <HistoryBox>
                          <HistoryText><Code>admin</Code> adds <Code>{h.items}</Code> in <Code>object_refs</Code> {h.more}</HistoryText>
                          <HistoryDate>{h.time}</HistoryDate>
                        </HistoryBox>
                      </HistoryRow>
                    ))}
                    <HistoryRow>
                      <Avatar $color="#e91e63"><MdAdd size={20} /></Avatar>
                      <HistoryBox>
                        <HistoryText><Code>admin</Code> creates a Report <Code>dns.log</Code></HistoryText>
                        <HistoryDate>May 26, 2023, 6:28:34 AM</HistoryDate>
                      </HistoryBox>
                    </HistoryRow>
                  </HistoryCard>
                </section>
              </SectionRow>

              <section>
                <SectionHead $tall>
                  <SectionTitle>Notes about this entity</SectionTitle>
                  <IconButton $color={c.secondary} aria-label="Manage notes"><MdOutlineEdit size={20} /></IconButton>
                  <HeadEnd><IconButton $color={c.secondary} aria-label="Add note"><MdAdd size={18} /></IconButton></HeadEnd>
                </SectionHead>
                <NotePanel><MdOutlineRateReview size={24} />Write a note<PushRight><MdExpandMore size={24} /></PushRight></NotePanel>
              </section>
            </Sections>
          </Main>
        </Body>
      </AppShell>
      <EditFab aria-label="Edit report"><MdEdit size={24} /></EditFab>

      <VmStatus>
        <span>se pointer inside or press Ctrl+G.</span>
        <VmDevices>
          {deviceShapes.map(d => <DeviceIcon key={d.name} {...d} />)}
          <VmDivider />
          <svg width="22" height="22" viewBox="0 0 22 22" aria-hidden="true">
            <path d="M1 1h20v13l-7 7H1z" fill="#36e2cc" stroke="#8b8d8f" strokeWidth="1.600" /><path d="M14 21v-7h7z" fill="#d9dadb" stroke="#8b8d8f" strokeWidth="1.200" />
          </svg>
          <svg width="26" height="26" viewBox="0 0 26 26" stroke="#8b8d8f" strokeWidth="1.500" aria-hidden="true">
            <path d="M4 26L26 4M10 26L26 10M16 26l10-10M21 26l5-5" />
          </svg>
        </VmDevices>
      </VmStatus>
    </Screen>
  );
}
